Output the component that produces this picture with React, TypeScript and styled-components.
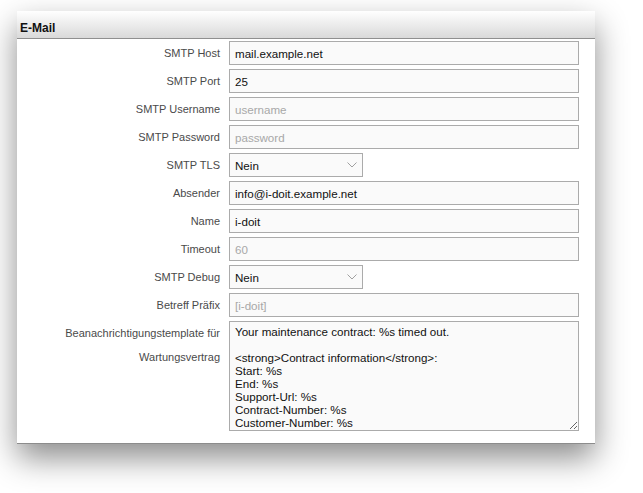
import React from "react";
import styled, { createGlobalStyle } from "styled-components";

const Global = createGlobalStyle`
  html, body { margin: 0; padding: 0; background: #ffffff; }
  body { font-family: "Liberation Sans", Arial, sans-serif; }
`;

const Page = styled.div`
  min-height: 493px;
  box-sizing: border-box;
  padding: 11px 48px 48px 17px;
`;

const Panel = styled.section`
  width: 578px;
  background: #ffffff;
  border-bottom: 1px solid #8c8c8c;
  box-shadow: 0 14px 30px rgba(0, 0, 0, 0.45);
`;

const Header = styled.header`
  height: 28px;
  box-sizing: border-box;
  padding: 10px 0 0 3px;
  background: linear-gradient(#ffffff, #d9d9d9);
  border-bottom: 1px solid #8f8f8f;
  font-family: "Liberation Sans", Arial, sans-serif;
  font-weight: bold;
  font-size: 12px;
  color: #111;
`;

const Form = styled.div`
  display: grid;
  grid-template-columns: 203px 350px;
  column-gap: 9px;
  row-gap: 4px;
  padding: 2px 0 12px 0;
`;

const Label = styled.label<{ $multi?: boolean }>`
  text-align: right;
  font-size: 11px;
  color: #4a4a4a;
  line-height: 24px;
  padding-left: ${(p) => (p.$multi ? "40px" : "0")};
`;

const Input = styled.input<{ $muted?: boolean }>`
  box-sizing: border-box;
  height: 24px;
  width: 100%;
  margin: 0;
  padding: 0 5px;
  border: 1px solid #ababab;
  background: #fafafa;
  font-family: "Liberation Sans", Arial, sans-serif;
  font-size: 11.6px;
  color: ${(p) => (p.$muted ? "#9c9c9c" : "#111")};
  outline: none;
  &::placeholder { color: #a8a8a8; }
`;

const SelectWrap = styled.div`
  position: relative;
  width: 134px;
  height: 24px;
`;

const Select = styled.select`
  appearance: none;
  -webkit-appearance: none;
  box-sizing: border-box;
  width: 100%;
  height: 24px;
  margin: 0;
  padding: 0 5px;
  border: 1px solid #ababab;
  border-radius: 0;
  background: #fafafa;
  font-family: "Liberation Sans", Arial, sans-serif;
  font-size: 11.6px;
  color: #111;
  outline: none;
`;

const Chevron = styled.svg`
  position: absolute;
  right: 6px;
  top: 9px;
  pointer-events: none;
`;

const TextArea = styled.textarea`
  box-sizing: border-box;
  width: 100%;
  height: 110px;
  margin: 0;
  padding: 3px 5px;
  border: 1px solid #ababab;
  background: #fafafa;
  font-family: "Liberation Sans", Arial, sans-serif;
  font-size: 11.6px;
  line-height: 13px;
  color: #111;
  overflow: hidden;
  resize: both;
  outline: none;
`;

const SelectField = ({ value }: { value: string }) => (
  <SelectWrap>
    <Select defaultValue={value}>
      <option>Nein</option>
      <option>Ja</option>
    </Select>
    <Chevron width="10" height="6" viewBox="0 0 10 6">
      <path d="M0.5 0.5 L5 5 L9.5 0.5" fill="none" stroke="#a0a0a0" strokeWidth="1" />
    </Chevron>
  </SelectWrap>
);

const template = `Your maintenance contract: %s timed out.

<strong>Contract information</strong>:
Start: %s
End: %s
Support-Url: %s
Contract-Number: %s
Customer-Number: %s`;

export default function App() {
  return (
    <>
      <Global />
      <Page>
        <Panel>
          <Header>E-Mail</Header>
          <Form>
            <Label>SMTP Host</Label>
            <Input defaultValue="mail.example.net" />
            <Label>SMTP Port</Label>
            <Input defaultValue="25" />
            <Label>SMTP Username</Label>
            <Input placeholder="username" />
            <Label>SMTP Password</Label>
            <Input placeholder="password" />
            <Label>SMTP TLS</Label>
            <SelectField value="Nein" />
            <Label>Absender</Label>
            <Input defaultValue="info@i-doit.example.net" />
            <Label>Name</Label>
            <Input defaultValue="i-doit" />
            <Label>Timeout</Label>
            <Input $muted placeholder="60" />
            <Label>SMTP Debug</Label>
            <SelectField value="Nein" />
            <Label>Betreff Präfix</Label>
            <Input $muted placeholder="[i-doit]" />
            <Label $multi>Beanachrichtigungstemplate für Wartungsvertrag</Label>
            <TextArea defaultValue={template} />
          </Form>
        </Panel>
      </Page>
    </>
  );
}
